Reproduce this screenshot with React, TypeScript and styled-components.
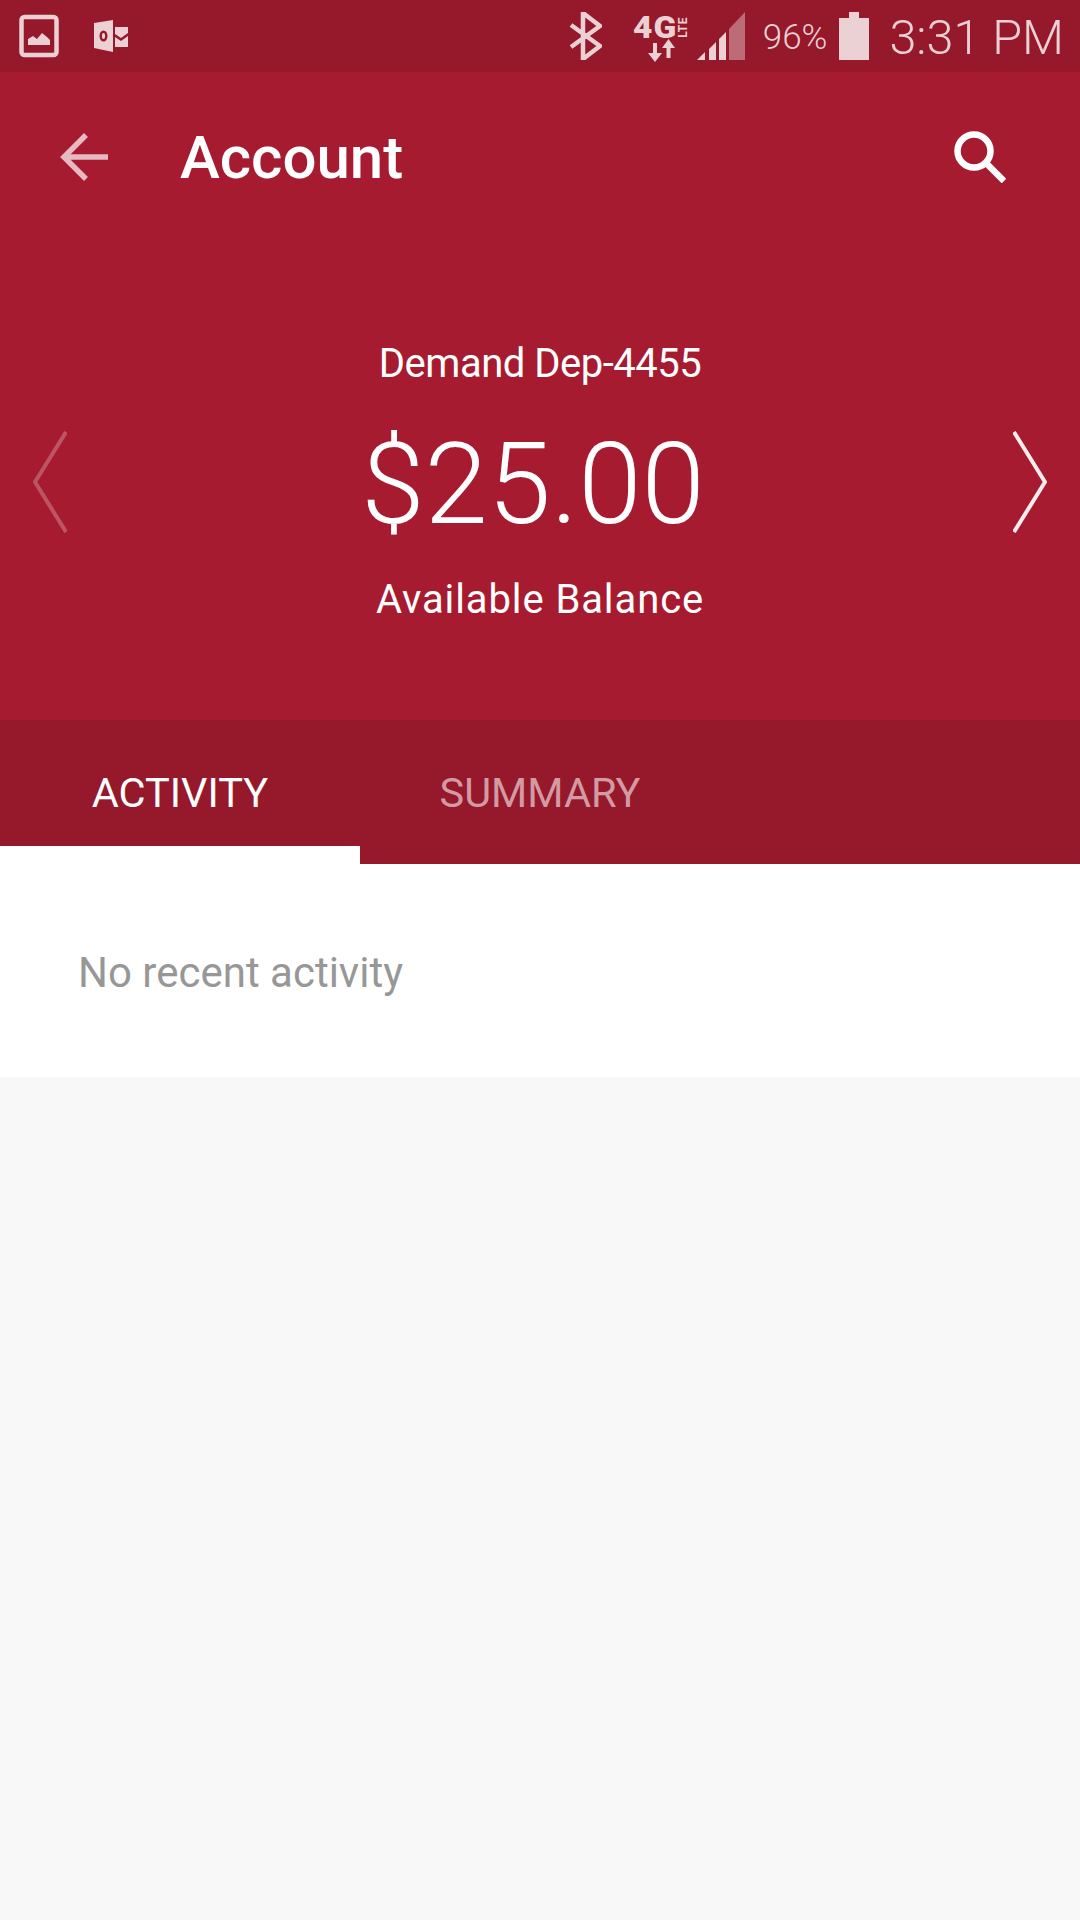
import styled, { createGlobalStyle } from "styled-components";

const GlobalStyle = createGlobalStyle`
  html, body {
    margin: 0;
    padding: 0;
    background: #f8f8f8;
  }
  * {
    box-sizing: border-box;
  }
`;

const Page = styled.div`
  width: 1080px;
  min-height: 1920px;
  background: #f8f8f8;
  font-family: Roboto, "Liberation Sans", sans-serif;
`;

const StatusBar = styled.div`
  height: 72px;
  background: #95182b;
  display: flex;
  align-items: center;
  justify-content: space-between;
  padding: 0 16px 0 19px;
  color: #ebd0d4;
`;

const StatusGroup = styled.div`
  display: flex;
  align-items: center;
`;

const StatusIcon = styled.svg<{ $left?: number }>`
  display: block;
  flex: none;
  margin-left: ${(props) => props.$left ?? 0}px;
`;

const NetworkBadge = styled.div`
  width: 56px;
  height: 48px;
  margin-left: 31px;
`;

const NetworkLabel = styled.div`
  height: 27px;
  padding-top: 4px;
  display: flex;
  align-items: center;
`;

const NetworkType = styled.span`
  width: 45px;
  font-size: 31px;
  font-weight: 900;
  line-height: 23px;
  letter-spacing: 1px;
  transform: scaleX(1.08);
  transform-origin: left center;
`;

const NetworkGrade = styled.span`
  font-size: 12px;
  font-weight: 700;
  line-height: 10px;
  letter-spacing: 0.5px;
  writing-mode: vertical-rl;
  transform: rotate(180deg);
`;

const TrafficArrows = styled.svg`
  display: block;
  margin-left: 15px;
`;

const BatteryText = styled.span`
  font-size: 35px;
  font-weight: 300;
  margin: 2px 0 0 18px;
`;

const Clock = styled.span`
  font-size: 48.5px;
  font-weight: 300;
  margin: 2px 0 0 20px;
`;

const Header = styled.header`
  height: 648px;
  background: #a71b30;
  color: #fff;
  display: flex;
  flex-direction: column;
`;

const Toolbar = styled.div`
  height: 170px;
  display: flex;
  align-items: center;
  padding: 0 74px 0 60px;
`;

const ToolbarTitle = styled.h1`
  flex: 1;
  margin: 0 0 0 72px;
  font-size: 60px;
  font-weight: 500;
`;

const Balance = styled.div`
  display: grid;
  grid-template-columns: 1fr auto 1fr;
  align-items: center;
  padding: 98px 33px 0;
`;

const Chevron = styled.svg<{ $end?: boolean; $dim?: boolean }>`
  display: block;
  justify-self: ${(props) => (props.$end ? "end" : "start")};
  opacity: ${(props) => (props.$dim ? 0.25 : 0.92)};
`;

const BalanceText = styled.div`
  display: flex;
  flex-direction: column;
  align-items: center;
`;

const BalanceLabel = styled.div<{ $tracking: number }>`
  font-size: 40px;
  line-height: 48px;
  letter-spacing: ${(props) => props.$tracking}px;
`;

const Amount = styled.div`
  font-size: 114px;
  font-weight: 300;
  line-height: 136px;
  margin: 28px 14px 24px 0;
`;

const Tabs = styled.nav`
  height: 144px;
  background: #95182b;
  display: flex;
`;

const Tab = styled.div<{ $active?: boolean }>`
  width: 360px;
  display: flex;
  align-items: center;
  justify-content: center;
  font-size: 41.5px;
  color: ${(props) => (props.$active ? "#fff" : "#d49aa4")};
  box-shadow: ${(props) => (props.$active ? "inset 0 -18px 0 #fff" : "none")};
`;

const ActivityPanel = styled.section`
  height: 213px;
  background: #fff;
  display: flex;
  align-items: center;
  padding: 4px 0 0 78px;
  font-size: 42px;
  color: #979797;
`;

function App() {
  return (
    <Page>
      <GlobalStyle />
      <StatusBar>
        <StatusGroup>
          <StatusIcon width="40" height="44" viewBox="0 0 40 44" fill="none">
            <rect x="2.5" y="3" width="35" height="38" rx="3" stroke="currentColor" strokeWidth="4.5" />
            <path d="M9 31v-6l5-3 4 3 5-6 5 4 3 3v5z" fill="currentColor" />
          </StatusIcon>
          <StatusIcon $left={35} width="34" height="32" viewBox="0 0 34 32" fill="currentColor">
            <path d="M0 3 19 0v32L0 28z" />
            <path d="M21 7h13v6l-7 5-6-4zM21 17l6 4 7-5v11H21z" />
            <ellipse cx="9.500" cy="16" rx="4" ry="5.500" fill="#95182b" />
            <ellipse cx="9.500" cy="16" rx="1.600" ry="3" fill="currentColor" />
          </StatusIcon>
        </StatusGroup>
        <StatusGroup>
          <StatusIcon width="33" height="48" viewBox="0 0 33 48" fill="none">
            <path d="M2 13 31 34 14 47V1l17 13L2 35" stroke="currentColor" strokeWidth="4.500" />
          </StatusIcon>
          <NetworkBadge>
            <NetworkLabel>
              <NetworkType>4G</NetworkType>
              <NetworkGrade>LTE</NetworkGrade>
            </NetworkLabel>
            <TrafficArrows width="28" height="23" viewBox="0 0 28 23" fill="currentColor">
              <path d="M5 4h4v10h5l-7 9-7-9h5zM20.500 0 27 9h-4.500v10h-4V9H14z" />
            </TrafficArrows>
          </NetworkBadge>
          <StatusIcon $left={8} width="48" height="48" viewBox="0 0 48 48" fill="currentColor">
            <path d="M0 48 8 40v8zM12 37l7-7v18h-7zM22 27l7-7v28h-7z" />
            <path d="M32 17 48 0v48H32z" opacity=".45" />
          </StatusIcon>
          <BatteryText>96%</BatteryText>
          <StatusIcon $left={12} width="30" height="48" viewBox="0 0 30 48" fill="currentColor">
            <path d="M10 0h10v6h10v42H0V6h10z" />
          </StatusIcon>
          <Clock>3:31 PM</Clock>
        </StatusGroup>
      </StatusBar>

      <Header>
        <Toolbar>
          <svg width="48" height="48" viewBox="0 0 48 48" fill="none" stroke="#e7b9c0" strokeWidth="5.500">
            <path d="M48 24H4M26 2 4 24l22 22" />
          </svg>
          <ToolbarTitle>Account</ToolbarTitle>
          <svg width="52" height="52" viewBox="0 0 52 52" fill="none" stroke="#fff" strokeWidth="6.500">
            <circle cx="20" cy="20" r="16.500" />
            <path d="m31 31 19 19" />
          </svg>
        </Toolbar>
        <Balance>
          <Chevron $dim width="34" height="102" viewBox="0 0 34 102" fill="none" stroke="#fff" strokeWidth="4">
            <path d="M33 1 2 51l31 50" />
          </Chevron>
          <BalanceText>
            <BalanceLabel $tracking={-0.5}>Demand Dep-4455</BalanceLabel>
            <Amount>$25.00</Amount>
            <BalanceLabel $tracking={0.9}>Available Balance</BalanceLabel>
          </BalanceText>
          <Chevron $end width="34" height="102" viewBox="0 0 34 102" fill="none" stroke="#fff" strokeWidth="4">
            <path d="m1 1 31 50-31 50" />
          </Chevron>
        </Balance>
      </Header>

      <Tabs>
        <Tab $active>ACTIVITY</Tab>
        <Tab>SUMMARY</Tab>
      </Tabs>

      <ActivityPanel>No recent activity</ActivityPanel>
    </Page>
  );
}

export default App;
